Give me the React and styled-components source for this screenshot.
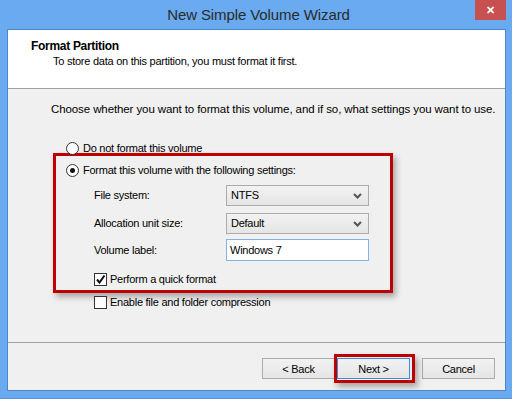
import React from 'react'
import styled, { createGlobalStyle } from 'styled-components'

const GlobalStyle = createGlobalStyle`
  html, body {
    margin: 0;
    padding: 0;
    background: #6aaaf0;
  }
  body {
    font-family: "Liberation Sans", Arial, sans-serif;
    font-size: 11px;
    letter-spacing: -0.25px;
    color: #000;
  }
`

function ChevronDown() {
  return (
    <svg width="9" height="6" viewBox="0 0 9 6">
      <path d="M1 1 L4.5 4.5 L8 1" fill="none" stroke="#555" strokeWidth="2" />
    </svg>
  )
}

function CheckMark() {
  return (
    <svg width="11" height="11" viewBox="0 0 11 11">
      <path d="M2 5.5 L4.5 8.5 L9.5 1.5" fill="none" stroke="#111" strokeWidth="2" />
    </svg>
  )
}

function App() {
  return (
    <Window>
      <GlobalStyle />
      <TitleBar>
        <span />
        <Title>New Simple Volume Wizard</Title>
        <CloseButton>✕</CloseButton>
      </TitleBar>
      <Client>
        <Header>
          <HeaderTitle>Format Partition</HeaderTitle>
          <HeaderText>To store data on this partition, you must format it first.</HeaderText>
        </Header>
        <Body>
          <Intro>Choose whether you want to format this volume, and if so, what settings you want to use.</Intro>
          <OptionRow $top={24} $indent={15}>
            <Radio />
            <span>Do not format this volume</span>
          </OptionRow>
          <Highlight>
            <OptionRow $top={0} $indent={0}>
              <Radio $checked />
              <span>Format this volume with the following settings:</span>
            </OptionRow>
            <FieldRow $top={7}>
              <FieldLabel>File system:</FieldLabel>
              <Select>
                <span>NTFS</span>
                <ChevronDown />
              </Select>
            </FieldRow>
            <FieldRow $top={7}>
              <FieldLabel>Allocation unit size:</FieldLabel>
              <Select>
                <span>Default</span>
                <ChevronDown />
              </Select>
            </FieldRow>
            <FieldRow $top={5}>
              <FieldLabel>Volume label:</FieldLabel>
              <TextInput>Windows 7</TextInput>
            </FieldRow>
            <CheckRow $top={11} $indent={28}>
              <CheckBox>
                <CheckMark />
              </CheckBox>
              <span>Perform a quick format</span>
            </CheckRow>
          </Highlight>
          <CheckRow $top={2} $indent={43}>
            <CheckBox />
            <span>Enable file and folder compression</span>
          </CheckRow>
        </Body>
        <Footer>
          <Button>&lt; Back</Button>
          <NextWrap>
            <Button $focused>Next &gt;</Button>
            <NextMark />
          </NextWrap>
          <Button $gap>Cancel</Button>
        </Footer>
      </Client>
    </Window>
  )
}

export default App

const Window = styled.div`
  width: 512px;
  height: 399px;
  box-sizing: border-box;
  padding: 0 6px 7px 7px;
  background: #6aaaf0;
  border-bottom: 1px solid #5a93d6;
  display: flex;
  flex-direction: column;
`

const TitleBar = styled.div`
  height: 29px;
  display: grid;
  grid-template-columns: 1fr auto 1fr;
  align-items: start;
`

const Title = styled.div`
  font-size: 15px;
  letter-spacing: -0.1px;
  color: #2b2b2b;
  line-height: 29px;
  padding-left: 4px;
`

const CloseButton = styled.div`
  justify-self: end;
  width: 31px;
  height: 20px;
  background: #c75050;
  color: #fff;
  font-size: 11px;
  font-weight: bold;
  display: flex;
  align-items: center;
  justify-content: center;
`

const Client = styled.div`
  flex: 1;
  border: 1px solid #4f86c6;
  background: #f0f0f0;
  display: flex;
  flex-direction: column;
  overflow: hidden;
`

const Header = styled.div`
  height: 59px;
  box-sizing: border-box;
  background: #fff;
  border-bottom: 1px solid #a0a0a0;
  padding: 9px 0 0 23px;
  line-height: 15px;
`

const HeaderTitle = styled.div`
  font-size: 12px;
  letter-spacing: -0.3px;
  font-weight: bold;
`

const HeaderText = styled.div`
  padding-left: 22px;
`

const Body = styled.div`
  height: 254px;
  box-sizing: border-box;
  border-bottom: 1px solid #a0a0a0;
  padding: 13px 0 0 43px;
  line-height: 15px;
`

const Intro = styled.div`
  white-space: nowrap;
  font-size: 11.5px;
  letter-spacing: -0.1px;
`

const OptionRow = styled.div`
  display: flex;
  align-items: center;
  gap: 4px;
  margin-top: ${p => p.$top}px;
  margin-left: ${p => p.$indent}px;
  height: 15px;
`

const Radio = styled.span`
  width: 11px;
  height: 11px;
  border-radius: 50%;
  border: 1px solid #333;
  background: #fff;
  position: relative;
  flex: none;

  &::after {
    content: '';
    display: ${p => (p.$checked ? 'block' : 'none')};
    position: absolute;
    left: 3px;
    top: 3px;
    width: 5px;
    height: 5px;
    border-radius: 50%;
    background: #111;
  }
`

const Highlight = styled.div`
  width: 340px;
  height: 140px;
  box-sizing: border-box;
  margin: -3px 0 0 2px;
  border: 3px solid #c00000;
  box-shadow: 3px 4px 6px rgba(0, 0, 0, 0.3);
  padding: 7px 0 0 10px;
`

const FieldRow = styled.div`
  display: flex;
  align-items: center;
  margin-top: ${p => p.$top}px;
  padding-left: 28px;
`

const FieldLabel = styled.div`
  width: 132px;
`

const Select = styled.div`
  width: 143px;
  height: 21px;
  box-sizing: border-box;
  border: 1px solid #acacac;
  background: linear-gradient(#f2f2f2, #e5e5e5);
  display: flex;
  align-items: center;
  justify-content: space-between;
  padding: 0 6px 0 4px;
`

const TextInput = styled.div`
  width: 143px;
  height: 22px;
  box-sizing: border-box;
  border: 1px solid #7eb4ea;
  background: #fff;
  display: flex;
  align-items: center;
  padding-left: 3px;
`

const CheckRow = styled.div`
  display: flex;
  align-items: center;
  gap: 3px;
  margin-top: ${p => p.$top}px;
  padding-left: ${p => p.$indent}px;
  height: 15px;
`

const CheckBox = styled.span`
  width: 11px;
  height: 11px;
  border: 1px solid #333;
  background: #fff;
  flex: none;
  display: flex;
  align-items: center;
  justify-content: center;
`

const Footer = styled.div`
  flex: 1;
  display: flex;
  align-items: flex-start;
  justify-content: flex-end;
  padding: 15px 10px 0 0;
  gap: 2px;
`

const Button = styled.div`
  width: 73px;
  height: 21px;
  box-sizing: border-box;
  border: 1px solid ${p => (p.$focused ? '#3c8ce0' : '#acacac')};
  background: linear-gradient(#f2f2f2, #e5e5e5);
  display: flex;
  align-items: center;
  justify-content: center;
  margin-left: ${p => (p.$gap ? 10 : 0)}px;
`

const NextWrap = styled.div`
  position: relative;
`

const NextMark = styled.div`
  position: absolute;
  left: -3px;
  right: -5px;
  top: -4px;
  bottom: -4px;
  border: 3px solid #c00000;
  box-shadow: 3px 4px 6px rgba(0, 0, 0, 0.3);
`
